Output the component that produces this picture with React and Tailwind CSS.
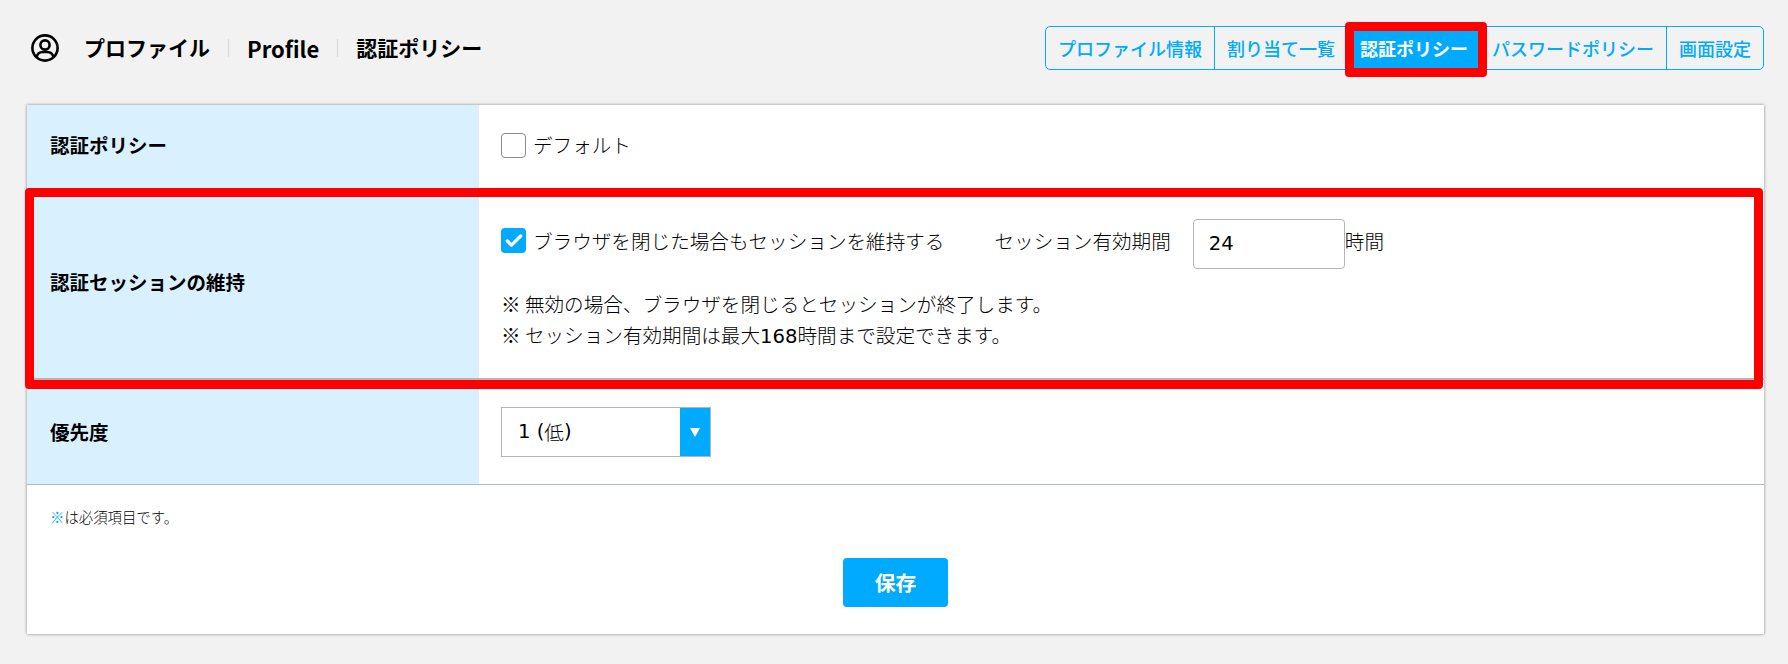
import { Check } from 'lucide-react';

const tabs = [
  { label: 'プロファイル情報' },
  { label: '割り当て一覧' },
  { label: '認証ポリシー', active: true },
  { label: 'パスワードポリシー' },
  { label: '画面設定' },
];

function UserIcon() {
  return (
    <svg viewBox="0 0 28 28" className="w-7 h-7 shrink-0" fill="none" stroke="#000" strokeWidth="2.6">
      <circle cx="14" cy="14" r="12.6" />
      <circle cx="14" cy="11" r="4.6" />
      <path d="M5.6 23.2c.8-3.6 3.600-5.200 6-5.200h4.800c2.400 0 5.200 1.600 6 5.200" />
    </svg>
  );
}

function Latin({ children }) {
  return <span className="font-normal font-['DejaVu_Sans',sans-serif]">{children}</span>;
}

function Row({ label, className, children }) {
  return (
    <div className={`flex ${className}`}>
      <div className="w-[452px] shrink-0 bg-[#d9f1ff] pl-[23px] pb-px flex items-center font-bold text-[19.5px]">{label}</div>
      <div className="flex-1 pl-[22px] flex flex-col justify-center">{children}</div>
    </div>
  );
}

export default function App() {
  return (
    <div className="min-h-[664px] bg-[#f2f2f2] text-black text-[19.6px] font-light font-['Noto_Sans_CJK_JP',sans-serif]">
      <header className="flex items-center justify-between pt-[26px] pl-[31px] pr-[24px] h-[70px]">
        <div className="flex items-center font-bold text-[21px]">
          <UserIcon />
          <span className="ml-[25px]">プロファイル</span>
          <span className="w-px h-[18px] bg-[#d8d8d8] mx-[18px]" />
          <span className="text-[22px]">Profile</span>
          <span className="w-px h-[18px] bg-[#d8d8d8] mx-[18px]" />
          <span>認証ポリシー</span>
        </div>
        <nav className="flex h-[44px] border border-[#00aaff] rounded-[5px] text-[18px] font-medium text-[#00aaff]">
          {tabs.map(({ label, active }, i) => (
            <div
              key={label}
              className={`relative flex items-center ${active ? 'pl-[13px] pr-3 bg-[#00aaff] text-white font-bold' : 'px-3'} ${i > 0 && !tabs[i - 1].active && !active ? 'border-l border-[#00aaff]' : ''}`}
            >
              {label}
              {active && <span className="absolute -left-[2px] -right-[7px] -top-[5px] -bottom-[8px] border-[9px] border-[#ff0000] rounded-[4px]" />}
            </div>
          ))}
        </nav>
      </header>

      <main className="relative ml-[27px] mr-[24px] mt-[35px] h-[529px] bg-white shadow-[0_0_3px_rgba(0,0,0,0.45)]">
        <Row label="認証ポリシー" className="h-[81px]">
          <div className="flex items-center">
            <span className="w-[25px] h-[25px] rounded-[4px] border border-[#8a8a8a] bg-white" />
            <span className="ml-[7px] -mt-[2px]">デフォルト</span>
          </div>
        </Row>

        <Row label="認証セッションの維持" className="h-[194px] border-b-2 border-[#b5b5b5]">
          <div className="flex items-center">
            <span className="w-[25px] h-[25px] rounded-[4px] bg-[#00aaff] flex items-center justify-center">
              <Check className="w-5 h-5 text-white" strokeWidth={4} />
            </span>
            <span className="ml-[7px]">ブラウザを閉じた場合もセッションを維持する</span>
            <span className="ml-[50px]">セッション有効期間</span>
            <input
              readOnly
              value="24"
              className="ml-[22px] mt-[6px] w-[152px] h-[50px] px-[15px] border border-[#b5b5b5] rounded-[4px] outline-none font-normal font-['DejaVu_Sans',sans-serif]"
            />
            <span>時間</span>
          </div>
          <p className="mt-[19px] leading-[31px]">※ 無効の場合、ブラウザを閉じるとセッションが終了します。</p>
          <p className="leading-[31px]">※ セッション有効期間は最大<Latin>168</Latin>時間まで設定できます。</p>
        </Row>

        <Row label="優先度" className="h-[105px] border-b border-[#a9bcc9]">
          <div className="flex w-[210px] h-[50px] border border-[#b5b5b5]">
            <span className="flex-1 flex items-center pl-[16px] whitespace-pre"><Latin>1 (</Latin>低<Latin>)</Latin></span>
            <span className="w-[30px] bg-[#00aaff] flex items-center justify-center">
              <svg viewBox="0 0 10 9" className="w-[10px] h-[9px]" fill="#fff"><path d="M0 0h10L5 9z" /></svg>
            </span>
          </div>
        </Row>

        <p className="pl-[23px] mt-[21px] text-[14.4px] leading-[22px]"><span className="text-[#00aaff]">※</span>は必須項目です。</p>
        <div className="flex justify-center mt-[30px]">
          <button className="w-[105px] h-[49px] bg-[#00aaff] text-white font-bold text-[20.8px] rounded-[4px]">保存</button>
        </div>

        <div className="absolute left-[-2px] right-[1px] top-[83px] h-[201px] border-[9px] border-[#ff0000] rounded-[4px]" />
      </main>
    </div>
  );
}
